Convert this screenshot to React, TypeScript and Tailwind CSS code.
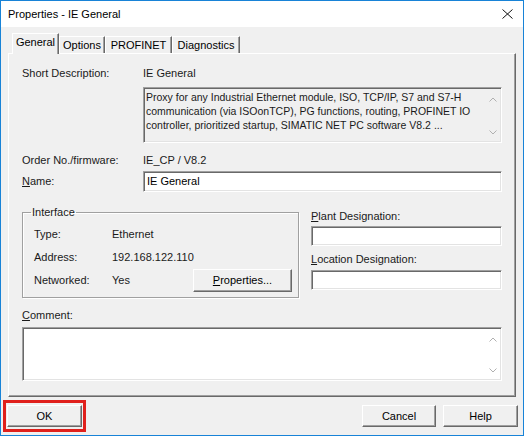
import React from 'react';

const sunken =
  'border border-t-[#a0a0a0] border-l-[#a0a0a0] border-r-white border-b-white shadow-[inset_1px_1px_0_#696969,inset_-1px_-1px_0_#e3e3e3]';

const Btn = ({ children, className = '' }: { children: React.ReactNode; className?: string }) => (
  <button
    className={`h-[22px] bg-[#f0f0f0] border border-t-white border-l-white border-r-[#696969] border-b-[#696969] shadow-[inset_-1px_-1px_0_#a0a0a0] text-[11px] text-black flex items-center justify-center ${className}`}
  >
    {children}
  </button>
);

const ScrollArrows = () => (
  <div className="w-[17px] flex flex-col justify-between items-center pt-[9px] pb-[7px]">
    <svg width="8" height="5" viewBox="0 0 8 5">
      <path d="M0.5 4.5L4 1L7.5 4.5" stroke="#b0b0b0" fill="none" />
    </svg>
    <svg width="8" height="5" viewBox="0 0 8 5">
      <path d="M0.5 0.5L4 4L7.5 0.5" stroke="#b0b0b0" fill="none" />
    </svg>
  </div>
);

const Tab = ({ label, width, active = false }: { label: string; width: string; active?: boolean }) => (
  <div
    className={`${width} ${
      active ? 'h-[21px] -mb-px relative z-10 pb-[3px]' : 'h-[17px]'
    } bg-[#f0f0f0] border-t border-l border-t-white border-l-white border-r border-r-[#696969] shadow-[inset_-1px_0_0_#a0a0a0] flex items-center justify-center text-[11px] text-black`}
  >
    {label}
  </div>
);

const App: React.FC = () => {
  return (
    <div className="w-[524px] h-[436px] border border-[#1883d7] bg-[#f0f0f0] flex flex-col font-['Liberation_Sans',Arial,sans-serif] text-[11px] text-[#1a1a1a] overflow-hidden">
      {/* title bar */}
      <div className="h-[26px] bg-white flex items-center justify-between pl-[7px] pr-[10px] shrink-0">
        <span className="text-[11px] text-black">Properties - IE General</span>
        <svg width="11" height="10" viewBox="0 0 11 10">
          <path d="M0.5 0.5L10.5 9.5M10.5 0.5L0.5 9.5" stroke="#111" strokeWidth="1" fill="none" />
        </svg>
      </div>

      <div className="px-[7px]">
        {/* tabs */}
        <div className="h-[26px] flex items-end pl-[4px]">
          <Tab label="General" width="w-[47px]" active />
          <Tab label="Options" width="w-[46px]" />
          <Tab label="PROFINET" width="w-[67px]" />
          <Tab label="Diagnostics" width="w-[68px]" />
        </div>

        {/* tab page */}
        <div className="w-[508px] h-[344px] border border-t-white border-l-white border-r-[#696969] border-b-[#696969] shadow-[inset_-1px_-1px_0_#a0a0a0] px-[13px]">
          <div className="flex h-[14px] items-center mt-[12px]">
            <span className="w-[121px]">Short Description:</span>
            <span>IE General</span>
          </div>

          <div className={`ml-[121px] mt-[7px] h-[56px] bg-[#f0f0f0] flex ${sunken}`}>
            <div className="flex-1 pl-[2px] pt-[2px] leading-[14px] whitespace-nowrap overflow-hidden text-[10.5px]">
              <div>Proxy for any Industrial Ethernet module, ISO, TCP/IP, S7 and S7-H</div>
              <div>communication (via ISOonTCP), PG functions, routing, PROFINET IO</div>
              <div>controller, prioritized startup, SIMATIC NET PC software V8.2 ...</div>
            </div>
            <ScrollArrows />
          </div>

          <div className="flex h-[14px] items-center mt-[10px]">
            <span className="w-[121px]">Order No./firmware:</span>
            <span>IE_CP / V8.2</span>
          </div>

          <div className="flex items-center mt-[4px]">
            <span className="w-[121px]">
              <u>N</u>ame:
            </span>
            <div className={`flex-1 h-[21px] bg-white flex items-center pl-[3px] text-black ${sunken}`}>
              IE General
            </div>
          </div>

          <div className="flex mt-[13px]">
            <fieldset className="w-[277px] h-[93px] border border-[#a0a0a0] shadow-[1px_1px_0_white,inset_1px_1px_0_white] pl-[8px] pr-[6px]">
              <legend className="px-[1px] h-[14px] leading-[14px]">Interface</legend>
              <div className="ml-[3px] flex h-[14px] items-center mt-[8px]">
                <span className="w-[78px]">Type:</span>
                <span>Ethernet</span>
              </div>
              <div className="ml-[3px] flex h-[14px] items-center mt-[9px]">
                <span className="w-[78px]">Address:</span>
                <span>192.168.122.110</span>
              </div>
              <div className="ml-[3px] flex items-center mt-[5px]">
                <span className="w-[78px]">Networked:</span>
                <span>Yes</span>
                <Btn className="ml-auto w-[99px] h-[23px]">
                  <span>
                    <u>P</u>roperties...
                  </span>
                </Btn>
              </div>
            </fieldset>

            <div className="ml-[12px] flex-1 flex flex-col">
              <span className="mt-[4px] h-[14px] leading-[14px]">
                <u>P</u>lant Designation:
              </span>
              <div className={`mt-[3px] h-[20px] bg-white ${sunken}`} />
              <span className="mt-[6px] h-[14px] leading-[14px]">
                <u>L</u>ocation Designation:
              </span>
              <div className={`mt-[4px] h-[20px] bg-white ${sunken}`} />
            </div>
          </div>

          <div className="mt-[10px] h-[14px] leading-[14px]">
            <u>C</u>omment:
          </div>
          <div className={`mt-[5px] h-[54px] bg-white flex ${sunken}`}>
            <div className="flex-1" />
            <ScrollArrows />
          </div>
        </div>
      </div>

      {/* bottom buttons */}
      <div className="flex items-center pl-[2px] pr-[5px] mt-[3px]">
        <div className="border-[3px] border-[#e0201c] px-[1px] py-[2px]">
          <Btn className="w-[75px]">OK</Btn>
        </div>
        <Btn className="w-[74px] ml-auto">Cancel</Btn>
        <Btn className="w-[75px] ml-[7px]">Help</Btn>
      </div>
    </div>
  );
};

export default App;
